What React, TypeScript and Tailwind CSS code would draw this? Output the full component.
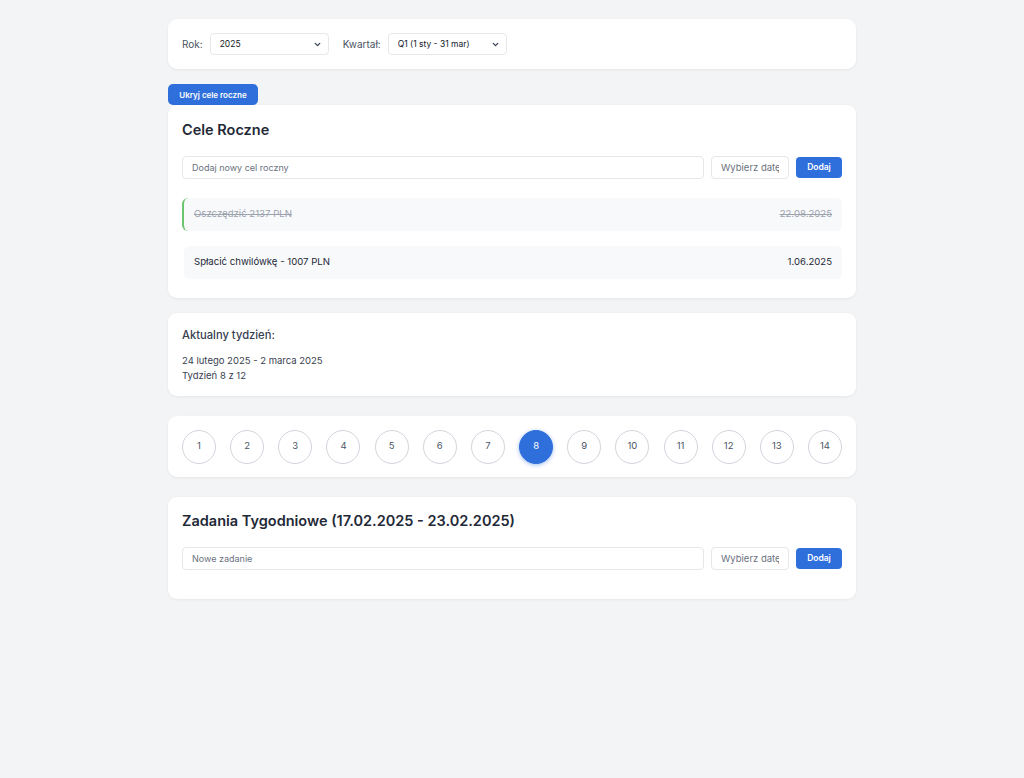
import React, { useState } from 'react';
import { ChevronDown } from 'lucide-react';

const weeks = Array.from({ length: 14 }, (_, i) => i + 1);

interface Goal {
  text: string;
  date: string;
  done: boolean;
}

const goals: Goal[] = [
  { text: 'Oszczędzić 2137 PLN', date: '22.08.2025', done: true },
  { text: 'Spłacić chwilówkę - 1007 PLN', date: '1.06.2025', done: false },
];

const AddRow: React.FC<{ placeholder: string }> = ({ placeholder }) => (
  <div className="flex items-center gap-[7px]">
    <input
      placeholder={placeholder}
      className="flex-1 h-[23px] px-[9px] text-[9px] border border-[#e5e7eb] rounded-[4px] bg-white placeholder:text-[#6b7280] outline-none"
    />
    <input
      placeholder="Wybierz datę"
      className="w-[78px] h-[23px] px-[9px] text-[9.5px] border border-[#e5e7eb] rounded-[4px] bg-white placeholder:text-[#6b7280] outline-none"
    />
    <button className="w-[46px] h-[21px] rounded-[4px] bg-[#2f6fdc] text-white text-[8.5px] font-semibold">
      Dodaj
    </button>
  </div>
);

const Select: React.FC<{ value: string }> = ({ value }) => (
  <div className="relative w-[119px] h-[22px] flex">
    <select className="block appearance-none w-full h-[22px] pl-[9px] pr-5 text-[8.5px] border border-[#e5e7eb] rounded-[4px] bg-white text-[#111827] outline-none">
      <option>{value}</option>
    </select>
    <ChevronDown size={9} strokeWidth={3.5} className="absolute right-[7px] top-[6.5px] text-[#374151] pointer-events-none" />
  </div>
);

export default function App() {
  const [activeWeek, setActiveWeek] = useState(8);

  return (
    <div className="min-h-[778px] bg-[#f3f4f6] pt-[19px] pb-10 text-[#1f2937]" style={{ fontFamily: 'Inter, "Noto Sans", sans-serif' }}>
      <div className="w-[688px] mx-auto flex flex-col">
        {/* Filters */}
        <div className="bg-white rounded-[9px] shadow-[0_1px_3px_rgba(0,0,0,0.06)] h-[50px] px-[14px] flex items-center gap-[14px]">
          <div className="flex items-center gap-[7px]">
            <span className="text-[10px] text-[#4b5563]">Rok:</span>
            <Select value="2025" />
          </div>
          <div className="flex items-center gap-[7px]">
            <span className="text-[10px] text-[#4b5563]">Kwartał:</span>
            <Select value="Q1 (1 sty - 31 mar)" />
          </div>
        </div>

        <button className="mt-[15px] self-start w-[90px] h-[21px] rounded-[5px] bg-[#2f6fdc] text-white text-[8px] font-semibold">
          Ukryj cele roczne
        </button>

        {/* Annual goals */}
        <div className="bg-white rounded-[9px] shadow-[0_1px_3px_rgba(0,0,0,0.06)] px-[14px] pt-[16px] pb-[19px]">
          <h2 className="text-[14.5px] leading-[18px] font-semibold text-[#1f2937] mb-[17px]">Cele Roczne</h2>
          <AddRow placeholder="Dodaj nowy cel roczny" />
          <div className="mt-[19px] flex flex-col gap-[15px]">
            {goals.map(g => (
              <div
                key={g.text}
                className={`h-[33px] flex items-center justify-between pl-[10px] pr-[10px] rounded-[6px] bg-[#f8f9fb] text-[9.6px] ${g.done ? 'border-l-[2px] border-[#6bc46f] text-[#9ca3af] line-through' : 'ml-[2px] text-[#1f2937]'}`}
              >
                <span>{g.text}</span>
                <span>{g.date}</span>
              </div>
            ))}
          </div>
        </div>

        {/* Current week */}
        <div className="mt-[15px] bg-white rounded-[9px] shadow-[0_1px_3px_rgba(0,0,0,0.06)] h-[83px] px-[14px] pt-[15px]">
          <h3 className="text-[11.2px] leading-[15px] font-medium text-[#374151]">Aktualny tydzień:</h3>
          <p className="mt-[10px] text-[9.5px] leading-[15px] text-[#374151]">24 lutego 2025 - 2 marca 2025</p>
          <p className="text-[9.5px] leading-[15px] text-[#374151]">Tydzień 8 z 12</p>
        </div>

        {/* Week selector */}
        <div className="mt-[20px] bg-white rounded-[9px] shadow-[0_1px_3px_rgba(0,0,0,0.06)] h-[61px] px-[14px] flex items-center gap-[14.2px]">
          {weeks.map(w => (
            <button
              key={w}
              onClick={() => setActiveWeek(w)}
              className={`w-[34px] h-[34px] rounded-full flex items-center justify-center text-[9.5px] ${w === activeWeek ? 'bg-[#2f6fdc] text-white border border-[#2f6fdc] shadow-[0_1px_4px_rgba(47,111,220,0.45)]' : 'bg-white text-[#4b5563] border border-[#d1d5db]'}`}
            >
              {w}
            </button>
          ))}
        </div>

        {/* Weekly tasks */}
        <div className="mt-[20px] bg-white rounded-[9px] shadow-[0_1px_3px_rgba(0,0,0,0.06)] h-[102px] px-[14px] pt-[14px]">
          <h2 className="text-[14.5px] leading-[20px] font-semibold text-[#1f2937] mb-[16px]">Zadania Tygodniowe (17.02.2025 - 23.02.2025)</h2>
          <AddRow placeholder="Nowe zadanie" />
        </div>
      </div>
    </div>
  );
}
